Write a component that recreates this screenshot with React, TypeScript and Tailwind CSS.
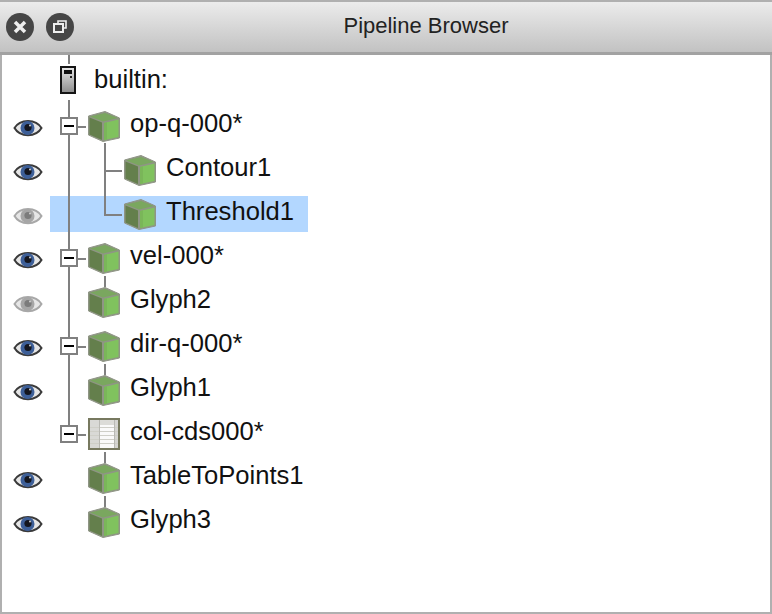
type Item = { name: string; level: 0 | 1; eye?: "on" | "off"; box?: boolean; icon?: "cube" | "table"; selected?: boolean };

const items: Item[] = [
  { name: "op-q-000*", level: 0, eye: "on", box: true, icon: "cube" },
  { name: "Contour1", level: 1, eye: "on", icon: "cube" },
  { name: "Threshold1", level: 1, eye: "off", icon: "cube", selected: true },
  { name: "vel-000*", level: 0, eye: "on", box: true, icon: "cube" },
  { name: "Glyph2", level: 0, eye: "off", icon: "cube" },
  { name: "dir-q-000*", level: 0, eye: "on", box: true, icon: "cube" },
  { name: "Glyph1", level: 0, eye: "on", icon: "cube" },
  { name: "col-cds000*", level: 0, box: true, icon: "table" },
  { name: "TableToPoints1", level: 0, eye: "on", icon: "cube" },
  { name: "Glyph3", level: 0, eye: "on", icon: "cube" },
];

const Eye = ({ on }: { on: boolean }) => (
  <svg width="30" height="20" viewBox="0 0 30 20">
    <path d="M1.5 10 C7 0.5 23 0.5 28.5 10 C23 19.5 7 19.5 1.5 10 Z" fill="#e6e6e6" stroke={on ? "#3a3a3a" : "#a8a8a8"} strokeWidth="2" />
    <circle cx="14.5" cy="10" r="7" fill={on ? "#3d5f98" : "#a6a6a6"} />
    <circle cx="15" cy="9.5" r="3.6" fill={on ? "#14161f" : "#7c7c7c"} />
    <circle cx="17" cy="7.5" r="1" fill="#d0d0d0" />
  </svg>
);

const Cube = () => (
  <svg width="32" height="31" viewBox="0 0 32 31">
    <path d="M0.5 5 L17 0.5 L31.5 7 L31.5 27 L15 30.5 L0.5 24 Z" fill="#8f9585" stroke="#8f9585" />
    <path d="M2 5.5 L17 2 L30 7 L15 10.5 Z" fill="#7aa75f" />
    <path d="M1.5 6.5 L14 11.5 L14 29 L1.5 23.5 Z" fill="#647f4c" />
    <path d="M16 12 L30.5 8.5 L30.5 26 L16 29 Z" fill="#80c25e" />
    <path d="M16 12 L19 11.3 L19 28.4 L16 29 Z" fill="#7ab659" />
  </svg>
);

const TableIcon = () => (
  <svg width="32" height="32" viewBox="0 0 32 32">
    <rect x="1" y="1" width="30" height="30" fill="#fafafa" stroke="#77795f" strokeWidth="2" />
    <rect x="2" y="2" width="28" height="5" fill="#dcdcd8" />
    <rect x="2" y="2" width="9" height="28" fill="#d9d9d6" />
    <rect x="27" y="2" width="3" height="28" fill="#d5d5d2" />
    <path d="M2 9.5H30M2 13.5H30M2 17.5H30M2 21.5H30M2 25.5H30" stroke="#cfcfc8" strokeWidth="1" />
    <path d="M11.5 2V30M26.5 2V30" stroke="#b9b9b4" strokeWidth="1" />
  </svg>
);

const ServerIcon = () => (
  <svg width="16" height="28" viewBox="0 0 16 28">
    <defs>
      <linearGradient id="srv" x1="0" y1="0" x2="0" y2="1">
        <stop offset="0" stopColor="#e8e8e8" />
        <stop offset="1" stopColor="#8c8c8c" />
      </linearGradient>
    </defs>
    <rect x="1" y="1" width="14" height="26" fill="url(#srv)" stroke="#151515" strokeWidth="2" />
    <rect x="4" y="4" width="8" height="4" fill="#111" />
    <rect x="10" y="10" width="2" height="2" fill="#222" />
  </svg>
);

const ExpandBox = () => (
  <div className="relative z-10 mt-1 flex h-[18px] w-[18px] items-center justify-center border-2 border-[#808080] bg-white">
    <div className="h-[2px] w-[10px] bg-black" />
  </div>
);

const TreeLines = () => (
  <svg width="768" height="557" viewBox="2 55 768 557" className="pointer-events-none absolute left-0 top-0" fill="none" stroke="#808080" strokeWidth="2">
    <path d="M69 55V64M69 100V426" />
    <path d="M78 127H86M78 259H86M78 347H86M78 435H86" />
    <path d="M105 143V215H122M105 171H122" />
    <path d="M105 276V287M105 364V375M105 452V463M105 496V507" />
  </svg>
);

export default function App() {
  return (
    <div className="flex h-[614px] w-[772px] flex-col overflow-hidden bg-white font-['Liberation_Sans',Arial,sans-serif] text-[#111]">
      {/* Title bar */}
      <div className="flex h-[55px] shrink-0 items-center gap-3 border-t-2 border-b-[3px] border-t-[#b0b0b0] border-b-[#a2a2a2] bg-gradient-to-b from-[#ececec] to-[#c2c2c2] pl-[6px]">
        <div className="flex h-7 w-7 items-center justify-center rounded-full bg-[#464646]">
          <svg width="16" height="16" viewBox="0 0 16 16">
            <path d="M3 3L13 13M13 3L3 13" stroke="#eeeeee" strokeWidth="3.5" />
          </svg>
        </div>
        <div className="flex h-7 w-7 items-center justify-center rounded-full bg-[#464646]">
          <svg width="16" height="16" viewBox="0 0 16 16" fill="none" stroke="#eeeeee" strokeWidth="1.6">
            <path d="M6 4V2H14V9H11" />
            <rect x="2" y="5" width="9" height="8" strokeWidth="2" />
          </svg>
        </div>
        <div className="flex-1 pb-[3px] pr-[6px] text-center text-[22px] leading-none text-[#222]">Pipeline Browser</div>
      </div>

      {/* Tree */}
      <div className="relative flex-1 border-x-2 border-b-2 border-[#b0b0b0] pt-[3px]">
        <div className="flex h-11 items-center pl-[58px]">
          <ServerIcon />
          <span className="ml-[18px] text-[25.6px] leading-none">builtin:</span>
        </div>
        {items.map((item) => (
          <div key={item.name} className="relative flex h-11 items-center">
            {item.selected && <div className="absolute left-[48px] top-[6px] h-9 w-[258px] bg-[#b3d7ff]" />}
            <div className="relative mt-2 flex w-[58px] shrink-0 pl-[11px]">
              {item.eye && <Eye on={item.eye === "on"} />}
            </div>
            <div className="w-[28px] shrink-0">{item.box && <ExpandBox />}</div>
            {item.level === 1 && <div className="w-9 shrink-0" />}
            <div className="relative mt-1 flex">{item.icon === "table" ? <TableIcon /> : <Cube />}</div>
            <span className="relative ml-[10px] text-[25.6px] leading-none">{item.name}</span>
          </div>
        ))}
        <TreeLines />
      </div>
    </div>
  );
}
